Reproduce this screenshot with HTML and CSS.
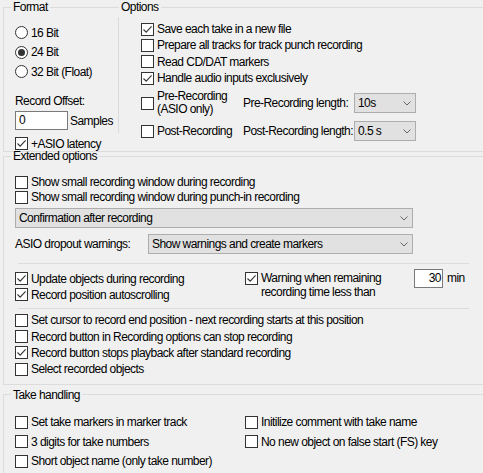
FILE: index.html
```html
<!DOCTYPE html>
<html>
<head>
<meta charset="utf-8">
<link rel="stylesheet" href="styles.css">
</head>
<body>
<div class="dlg">
  <fieldset class="grp top">
    <legend>Format</legend>
    <div class="top-row">
      <span class="opt-title">Options</span>
      <div class="fmt">
        <div class="radio-row"><span class="rad"></span>16 Bit</div>
        <div class="radio-row"><span class="rad on"></span>24 Bit</div>
        <div class="radio-row"><span class="rad"></span>32 Bit (Float)</div>
        <div class="offset-label">Record Offset:</div>
        <div class="offset-row"><span class="txt">0</span><span class="unit">Samples</span></div>
        <div class="cb asio"><span class="box"><svg width="11" height="11" viewBox="0 0 11 11"><path d="M1.5 5.5 L4.2 8.2 L9.6 2.4" fill="none" stroke="#333" stroke-width="1.1"/></svg></span>+ASIO latency</div>
      </div>
      <div class="vsep"></div>
      <div class="opts">
        <div class="cb"><span class="box"><svg width="11" height="11" viewBox="0 0 11 11"><path d="M1.5 5.5 L4.2 8.2 L9.6 2.4" fill="none" stroke="#333" stroke-width="1.1"/></svg></span>Save each take in a new file</div>
        <div class="cb"><span class="box"></span>Prepare all tracks for track punch recording</div>
        <div class="cb"><span class="box"></span>Read CD/DAT markers</div>
        <div class="cb"><span class="box"><svg width="11" height="11" viewBox="0 0 11 11"><path d="M1.5 5.5 L4.2 8.2 L9.6 2.4" fill="none" stroke="#333" stroke-width="1.1"/></svg></span>Handle audio inputs exclusively</div>
        <div class="pp">
          <div class="cb cb2"><span class="box"></span><span>Pre-Recording<br>(ASIO only)</span></div>
          <div class="lbl">Pre-Recording length:</div>
          <div class="combo"><span>10s</span><svg width="8" height="5" viewBox="0 0 8 5"><path d="M0.5 0.5 L4 4 L7.5 0.5" fill="none" stroke="#666" stroke-width="1"/></svg></div>
          <div class="cb"><span class="box"></span>Post-Recording</div>
          <div class="lbl">Post-Recording length:</div>
          <div class="combo"><span>0.5 s</span><svg width="8" height="5" viewBox="0 0 8 5"><path d="M0.5 0.5 L4 4 L7.5 0.5" fill="none" stroke="#666" stroke-width="1"/></svg></div>
        </div>
      </div>
    </div>
  </fieldset>

  <fieldset class="grp ext">
    <legend>Extended options</legend>
    <div class="ext-body">
      <div class="cb r15"><span class="box"></span>Show small recording window during recording</div>
      <div class="cb r15"><span class="box"></span>Show small recording window during punch-in recording</div>
      <div class="combo wide"><span>Confirmation after recording</span><svg width="8" height="5" viewBox="0 0 8 5"><path d="M0.5 0.5 L4 4 L7.5 0.5" fill="none" stroke="#666" stroke-width="1"/></svg></div>
      <div class="asio-row">
        <div>ASIO dropout warnings:</div>
        <div class="combo"><span>Show warnings and create markers</span><svg width="8" height="5" viewBox="0 0 8 5"><path d="M0.5 0.5 L4 4 L7.5 0.5" fill="none" stroke="#666" stroke-width="1"/></svg></div>
      </div>
      <div class="hsep first"></div>
      <div class="mid">
        <div class="left">
          <div class="cb r16"><span class="box"><svg width="11" height="11" viewBox="0 0 11 11"><path d="M1.5 5.5 L4.2 8.2 L9.6 2.4" fill="none" stroke="#333" stroke-width="1.1"/></svg></span>Update objects during recording</div>
          <div class="cb r16"><span class="box"><svg width="11" height="11" viewBox="0 0 11 11"><path d="M1.5 5.5 L4.2 8.2 L9.6 2.4" fill="none" stroke="#333" stroke-width="1.1"/></svg></span>Record position autoscrolling</div>
        </div>
        <div class="warn"><span class="box"><svg width="11" height="11" viewBox="0 0 11 11"><path d="M1.5 5.5 L4.2 8.2 L9.6 2.4" fill="none" stroke="#333" stroke-width="1.1"/></svg></span><span>Warning when remaining<br>recording time less than</span></div>
        <div class="minrow"><span class="txt num">30</span><span class="unit2">min</span></div>
      </div>
      <div class="hsep second"></div>
      <div class="list">
        <div class="cb r164"><span class="box"></span>Set cursor to record end position - next recording starts at this position</div>
        <div class="cb r164"><span class="box"></span>Record button in Recording options can stop recording</div>
        <div class="cb r164"><span class="box"><svg width="11" height="11" viewBox="0 0 11 11"><path d="M1.5 5.5 L4.2 8.2 L9.6 2.4" fill="none" stroke="#333" stroke-width="1.1"/></svg></span>Record button stops playback after standard recording</div>
        <div class="cb r164"><span class="box"></span>Select recorded objects</div>
      </div>
    </div>
  </fieldset>

  <fieldset class="grp take">
    <legend>Take handling</legend>
    <div class="take-body">
      <div class="cb r195"><span class="box"></span>Set take markers in marker track</div>
      <div class="cb r195"><span class="box"></span>Initilize comment with take name</div>
      <div class="cb r195"><span class="box"></span>3 digits for take numbers</div>
      <div class="cb r195"><span class="box"></span>No new object on false start (FS) key</div>
      <div class="cb r195"><span class="box"></span>Short object name (only take number)</div>
    </div>
  </fieldset>
</div>
</body>
</html>
```

FILE: styles.css
```css
* { box-sizing: border-box; }
html, body {
  margin: 0;
  background: #f0f0f0;
  overflow: hidden;
}
body {
  font-family: "Liberation Sans", Arial, sans-serif;
  font-size: 12px;
  letter-spacing: -0.55px;
  line-height: 14px;
  color: #000;
}
.dlg {
  width: 483px;
  padding-left: 3px;
}
.grp {
  margin: 0;
  padding: 0;
  border: 1px solid #dcdcdc;
  border-right: none;
  width: 480px;
  min-width: 0;
}
.grp legend {
  margin-left: 7px;
  padding: 0 2px;
  height: 14px;
  line-height: 14px;
}

/* top group */
.top-row {
  position: relative;
  display: flex;
  height: 137px;
}
.opt-title {
  position: absolute;
  left: 115px;
  top: -14px;
  padding: 0 2px;
  line-height: 14px;
  background: #f0f0f0;
}
.fmt {
  width: 114px;
  flex: none;
  padding: 9px 0 0 11px;
  display: flex;
  flex-direction: column;
}
.radio-row {
  height: 19.5px;
  display: flex;
  align-items: center;
  white-space: nowrap;
}
.rad {
  width: 13px;
  height: 13px;
  flex: none;
  border: 1px solid #333;
  border-radius: 50%;
  background: #fff;
  margin-right: 3px;
  display: flex;
  align-items: center;
  justify-content: center;
}
.rad.on::after {
  content: "";
  width: 7px;
  height: 7px;
  border-radius: 50%;
  background: #333;
}
.offset-label { margin-top: 12.5px; }
.offset-row {
  margin-top: 3px;
  height: 19px;
  display: flex;
  align-items: center;
}
.txt {
  display: block;
  width: 53px;
  height: 19px;
  border: 1px solid #7a7a7a;
  background: #fff;
  padding: 0 3px;
  line-height: 17px;
  flex: none;
}
.unit { margin-left: 2px; }
.fmt .asio { margin-top: 6.5px; }

.vsep {
  width: 1px;
  height: 116px;
  margin-top: 3px;
  background: #dcdcdc;
  flex: none;
}
.opts {
  flex: 1;
  padding: 7px 0 0 22px;
}
.opts > .cb { height: 16.33px; }

.cb {
  display: flex;
  align-items: center;
  height: 14px;
  white-space: nowrap;
}
.box {
  width: 13px;
  height: 13px;
  flex: none;
  border: 1px solid #333;
  background: #fff;
  margin-right: 3px;
}
.box svg { display: block; }

.pp {
  display: grid;
  grid-template-columns: 102px 111px 62px;
  grid-template-rows: 20px 20px;
  row-gap: 8px;
  align-items: center;
  margin-top: 6.7px;
}
.cb2 { line-height: 13px; height: 26px; }
.combo {
  display: flex;
  align-items: center;
  justify-content: space-between;
  height: 20px;
  background: #e1e1e1;
  border: 1px solid #adadad;
  padding: 0 4px 0 3px;
  white-space: nowrap;
}
.combo svg { flex: none; }

/* extended */
.ext { margin-top: -3px; }
.ext-body { padding: 11.5px 0 6.4px 11px; }
.r15 { height: 15px; }
.r16 { height: 16px; }
.r164 { height: 16.4px; }
.combo.wide {
  width: 398px;
  margin-top: 3.5px;
}
.asio-row {
  display: grid;
  grid-template-columns: 133px 265px;
  align-items: center;
  height: 20px;
  margin-top: 6px;
}
.hsep {
  height: 1px;
  width: 451px;
  margin-left: 3px;
  background: #dcdcdc;
}
.hsep.first { margin-top: 8.5px; }
.hsep.second { margin-top: 5.2px; }
.mid {
  display: grid;
  grid-template-columns: 230px 169px auto;
  margin-top: 7px;
}
.warn {
  display: flex;
  align-items: flex-start;
  white-space: nowrap;
}
.warn .box { margin-top: 1.5px; }
.minrow {
  display: flex;
  align-items: flex-start;
}
.num {
  width: 29px;
  margin-top: -2px;
  padding: 0 1px 0 0;
  text-align: right;
}
.unit2 { margin-left: 4px; }
.list { margin-top: 3.3px; }

/* take */
.take { margin-top: 3px; }
.take-body {
  display: grid;
  grid-template-columns: 230px auto;
  padding: 10.75px 0 20px 11px;
}
.r195 { height: 19.5px; }
```
